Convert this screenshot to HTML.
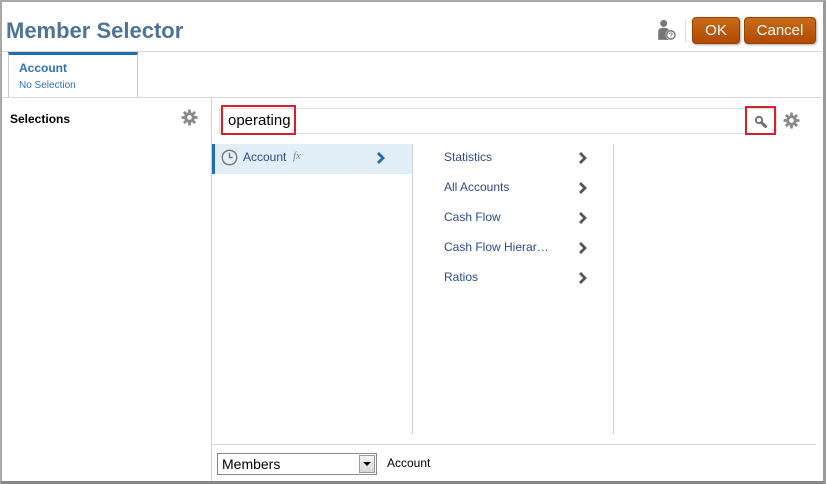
<!DOCTYPE html>
<html><head><style>
*{margin:0;padding:0;box-sizing:border-box}
body{width:826px;height:484px;background:#fff;font-family:"Liberation Sans",Arial,sans-serif;position:relative;overflow:hidden}
.a{position:absolute}
.frame{left:0;top:0;width:826px;height:484px;border:2px solid #a9a9a9;border-top-width:2px;border-right:3px solid #9a9a9a;border-bottom:3px solid #888}
.title{left:6px;top:18px;font-size:22px;font-weight:bold;color:#4d7396}
.btn{top:17px;height:27px;border-radius:4px;background:linear-gradient(#c96a1a,#b04a00);border:1px solid #9a4000;color:#fff;font-size:15px;text-align:center;line-height:25px;box-shadow:1px 1px 2px #aaa}
.hl{height:1px;background:#d8d8d8}
.vl{width:1px;background:#d0d0d0}
.item{left:444px;font-size:12px;color:#2e4b8c}
</style></head><body>
<div class="a frame"></div>
<div class="a title">Member Selector</div>
<svg class="a" style="left:656px;top:19px" width="22" height="22" viewBox="0 0 20 20"><circle cx="7" cy="4" r="3.2" fill="#777"/><path d="M2 19V11q0-3 5-3t5 3v8z" fill="#777"/><circle cx="13.5" cy="14.5" r="4.8" fill="#fff"/><circle cx="13.5" cy="14.5" r="3.8" fill="none" stroke="#777" stroke-width="1.3"/><text x="11.6" y="17" font-size="6.5" font-weight="bold" fill="#777" font-family="Liberation Sans">?</text></svg>
<div class="a vl" style="left:685px;top:20px;height:22px;background:#ddd"></div>
<div class="a btn" style="left:692px;width:48px">OK</div>
<div class="a btn" style="left:744px;width:72px">Cancel</div>
<div class="a hl" style="left:2px;top:51px;width:820px"></div>
<div class="a" style="left:8px;top:52px;width:130px;height:46px;border:1px solid #c8c8c8;border-top:3px solid #1f6eb5;border-bottom:none;background:#fff"></div>
<div class="a" style="left:19px;top:61px;font-size:12px;font-weight:bold;color:#2a73b8">Account</div>
<div class="a" style="left:19px;top:80px;font-size:10px;color:#2a73b8">No Selection</div>
<div class="a hl" style="left:2px;top:97px;width:820px"></div>
<div class="a vl" style="left:211px;top:98px;height:383px"></div>
<div class="a" style="left:10px;top:112px;font-size:12px;font-weight:bold;color:#000">Selections</div>
<svg class="a" style="left:181px;top:109px" width="17" height="17" viewBox="0 0 16 16"><g fill="#8a8a8a"><circle cx="8" cy="8" r="5"/><rect x="6.7" y="0.5" width="2.6" height="15" rx="0.5"/><rect x="6.7" y="0.5" width="2.6" height="15" rx="0.5" transform="rotate(45 8 8)"/><rect x="6.7" y="0.5" width="2.6" height="15" rx="0.5" transform="rotate(90 8 8)"/><rect x="6.7" y="0.5" width="2.6" height="15" rx="0.5" transform="rotate(135 8 8)"/></g><circle cx="8" cy="8" r="2.2" fill="#fff"/></svg>
<div class="a" style="left:219px;top:108px;width:558px;height:26px;border:1px solid #ddd"></div>
<div class="a" style="left:221px;top:105px;width:75px;height:30px;border:2px solid #d7202b"></div>
<div class="a" style="left:228px;top:112px;font-size:15px;color:#000">operating</div>
<div class="a" style="left:745px;top:106px;width:31px;height:29px;border:2px solid #d7202b"></div>
<svg class="a" style="left:754px;top:115px" width="13" height="13" viewBox="0 0 13 13"><circle cx="5" cy="5" r="3.2" fill="none" stroke="#6f6f6f" stroke-width="1.8"/><path d="M7.5 7.5L11.5 11.5" stroke="#6f6f6f" stroke-width="3" stroke-linecap="round"/></svg>
<svg class="a" style="left:783px;top:112px" width="17" height="17" viewBox="0 0 16 16"><g fill="#8a8a8a"><circle cx="8" cy="8" r="5"/><rect x="6.7" y="0.5" width="2.6" height="15" rx="0.5"/><rect x="6.7" y="0.5" width="2.6" height="15" rx="0.5" transform="rotate(45 8 8)"/><rect x="6.7" y="0.5" width="2.6" height="15" rx="0.5" transform="rotate(90 8 8)"/><rect x="6.7" y="0.5" width="2.6" height="15" rx="0.5" transform="rotate(135 8 8)"/></g><circle cx="8" cy="8" r="2.2" fill="#fff"/></svg>
<div class="a" style="left:212px;top:144px;width:200px;height:30px;background:#e2eef8;border-left:3px solid #1f6eb5"></div>
<svg class="a" style="left:221px;top:149px" width="17" height="17" viewBox="0 0 16 16"><circle cx="8" cy="8" r="6.8" fill="none" stroke="#777" stroke-width="1.3"/><path d="M8 3.5V8H11" fill="none" stroke="#777" stroke-width="1.3"/></svg>
<div class="a" style="left:243px;top:150px;font-size:12px;color:#2e4b8c">Account</div>
<div class="a" style="left:293px;top:150px;font-size:11px;font-style:italic;color:#888;font-family:'Liberation Serif',serif">fx</div>
<svg class="a" style="left:376px;top:151px" width="10" height="14" viewBox="0 0 10 14"><path d="M2 2L7 7L2 12" fill="none" stroke="#1f6eb5" stroke-width="2.8"/></svg>
<div class="a vl" style="left:412px;top:144px;height:290px"></div>
<div class="a vl" style="left:613px;top:144px;height:290px"></div>
<div class="a item" style="top:150px">Statistics</div>
<div class="a item" style="top:180px">All Accounts</div>
<div class="a item" style="top:210px">Cash Flow</div>
<div class="a item" style="top:240px">Cash Flow Hierar…</div>
<div class="a item" style="top:270px">Ratios</div>
<svg class="a" style="left:578px;top:151px" width="10" height="134" viewBox="0 0 10 134"><g fill="none" stroke="#555" stroke-width="2.8"><path d="M2 2L7 7L2 12"/><path d="M2 32L7 37L2 42"/><path d="M2 62L7 67L2 72"/><path d="M2 92L7 97L2 102"/><path d="M2 122L7 127L2 132"/></g></svg>
<div class="a hl" style="left:212px;top:444px;width:604px"></div>
<div class="a" style="left:217px;top:453px;width:160px;height:22px;border:1px solid #888;background:#fff"></div>
<div class="a" style="left:222px;top:456px;font-size:14px;color:#000">Members</div>
<div class="a" style="left:359px;top:455px;width:16px;height:18px;background:linear-gradient(#f4f4f4,#d8d8d8);border:1px solid #999"></div>
<div class="a" style="left:363px;top:462px;width:0;height:0;border-left:4px solid transparent;border-right:4px solid transparent;border-top:4px solid #000"></div>
<div class="a" style="left:387px;top:456px;font-size:12px;color:#000">Account</div>
</body></html>
